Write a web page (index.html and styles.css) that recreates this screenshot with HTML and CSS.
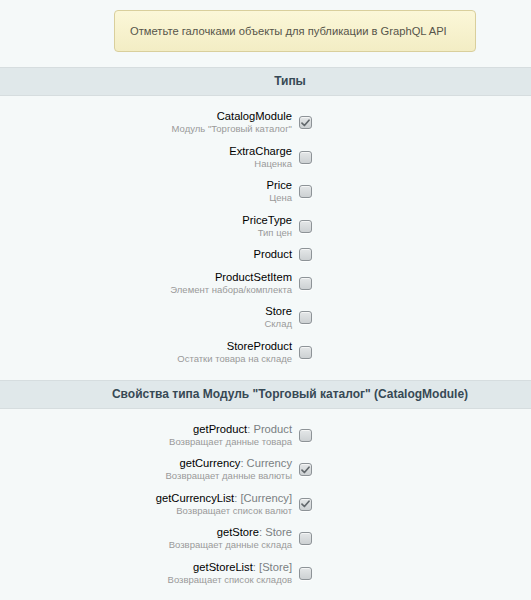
FILE: index.html
```html
<!DOCTYPE html>
<html lang="ru">
<head>
    <meta charset="UTF-8">
    <meta name="viewport" content="width=device-width, initial-scale=1.0">
    <title>GraphQL API</title>
    <link rel="stylesheet" href="styles.css">
</head>
<body>
    <div class="page">
        <div class="note">
            <div class="note-text">Отметьте галочками объекты для публикации в GraphQL API</div>
        </div>

        <div class="section-head">Типы</div>
        <div class="fields" id="types"></div>

        <div class="section-head">Свойства типа Модуль "Торговый каталог" (CatalogModule)</div>
        <div class="fields" id="props"></div>
    </div>

    <script>
        // Types
        const types = [
            { name: "CatalogModule", desc: "Модуль \"Торговый каталог\"", checked: true },
            { name: "ExtraCharge", desc: "Наценка" },
            { name: "Price", desc: "Цена" },
            { name: "PriceType", desc: "Тип цен" },
            { name: "Product", desc: "" },
            { name: "ProductSetItem", desc: "Элемент набора/комплекта" },
            { name: "Store", desc: "Склад" },
            { name: "StoreProduct", desc: "Остатки товара на складе" }
        ];

        // Fields of CatalogModule
        const props = [
            { name: "getProduct", type: "Product", desc: "Возвращает данные товара" },
            { name: "getCurrency", type: "Currency", desc: "Возвращает данные валюты", checked: true },
            { name: "getCurrencyList", type: "[Currency]", desc: "Возвращает список валют", checked: true },
            { name: "getStore", type: "Store", desc: "Возвращает данные склада" },
            { name: "getStoreList", type: "[Store]", desc: "Возвращает список складов" }
        ];

        const tick = '<svg width="9" height="8" viewBox="0 0 9 8"><path d="M1 4.2 L3.4 6.5 L8 1.2" fill="none" stroke="#62686c" stroke-width="1.7" stroke-linecap="round" stroke-linejoin="round"/></svg>';

        function renderFields(id, items) {
            const list = document.getElementById(id);
            items.forEach(item => {
                const row = document.createElement('div');
                row.className = 'field';
                const type = item.type ? `<span class="field-type">: ${item.type}</span>` : '';
                const desc = item.desc ? `<div class="field-desc">${item.desc}</div>` : '';
                row.innerHTML = `
                    <div class="field-label">
                        <div class="field-name">${item.name}${type}</div>
                        ${desc}
                    </div>
                    <div class="field-input">
                        <span class="cb${item.checked ? ' cb-checked' : ''}">${item.checked ? tick : ''}</span>
                    </div>
                `;
                list.appendChild(row);
            });
        }

        renderFields('types', types);
        renderFields('props', props);
    </script>
</body>
</html>
```

FILE: styles.css
```css
* {
    margin: 0;
    padding: 0;
    box-sizing: border-box;
}

body {
    font-family: 'Liberation Sans', Arial, sans-serif;
    background-color: #f5f9f9;
    color: #000;
}

.page {
    padding-top: 10px;
}

/* Note */
.note {
    width: 362px;
    margin-left: 114px;
    margin-bottom: 15px;
    padding: 13px 15px;
    border: 1px solid #d9cf9c;
    border-radius: 4px;
    background: linear-gradient(#fbf7d8, #f3edc4);
}

.note-text {
    font-size: 11.2px;
    line-height: 14px;
    color: #56554a;
}

/* Section header */
.section-head {
    height: 29px;
    line-height: 27px;
    padding-left: 49px;
    text-align: center;
    font-size: 12px;
    font-weight: bold;
    color: #374955;
    background-color: #e0e8ea;
    border-top: 1px solid #d6dddf;
    border-bottom: 1px solid #d6dddf;
}

/* Fields */
.fields {
    padding: 9px 0 10.5px;
}

.field {
    display: grid;
    grid-template-columns: 292px 1fr;
    column-gap: 7px;
    align-items: center;
    padding: 5px 0 4.5px;
}

.field-label {
    text-align: right;
}

.field-name {
    font-size: 11.2px;
    line-height: 13px;
    color: #000;
}

.field-type {
    color: #7a7f82;
}

.field-desc {
    font-size: 9.5px;
    line-height: 12px;
    color: #9a9a9a;
}

.field-input {
    display: flex;
    align-items: center;
}

/* Checkbox */
.cb {
    width: 13px;
    height: 13px;
    display: flex;
    align-items: center;
    justify-content: center;
    border: 1px solid #8d9397;
    border-radius: 3px;
    background: linear-gradient(#e4e7e8, #cdd1d3);
    box-shadow: inset 0 1px 0 rgba(255,255,255,0.6), 0 1px 0 rgba(255,255,255,0.8);
}
```
